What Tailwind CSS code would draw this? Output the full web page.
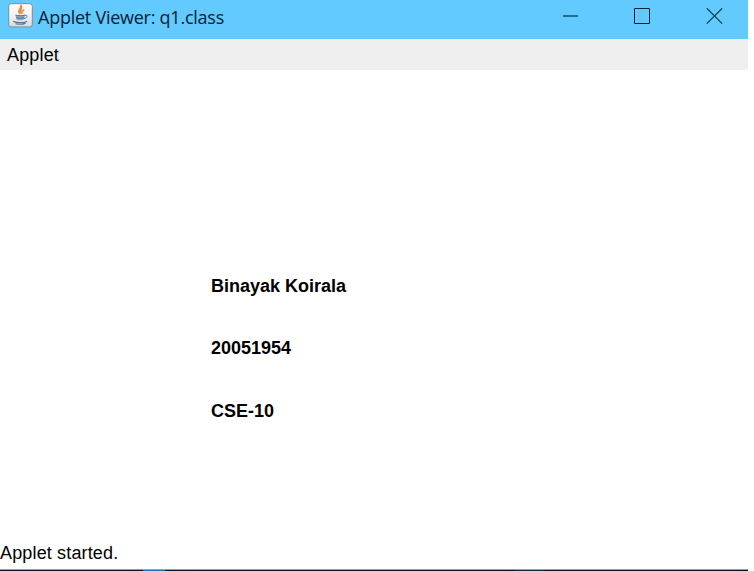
<!DOCTYPE html>
<html lang="en">
<head>
<meta charset="utf-8">
<title>Applet Viewer: q1.class</title>
<script src="https://cdn.jsdelivr.net/npm/@tailwindcss/browser@4"></script>
</head>
<body class="h-[571px] overflow-hidden bg-white font-['Liberation_Sans',sans-serif] text-black">
<div class="flex h-[571px] w-[748px] flex-col">
  <header class="flex h-[39px] shrink-0 items-start bg-[#62caff]">
    <svg class="mt-[3px] ml-2 shrink-0" width="25" height="25" viewBox="0 0 25 25" fill="none">
      <defs><linearGradient id="tile" x1="0" y1="0" x2="0" y2="1"><stop stop-color="#fff"/><stop offset=".55" stop-color="#f1f1f3"/><stop offset="1" stop-color="#d9dadd"/></linearGradient></defs>
      <rect x=".7" y=".7" width="23.6" height="23.2" rx="2.5" fill="url(#tile)" stroke="#7f8d99" stroke-width="1"/>
      <path d="M12.2 11C7.800 7.600 14 6 12.600 2.200c3.400 3.200-2.400 4.800-.4 8.800M14.300 10.800c-2.300-2.600 1.800-3 1.500-4.600" stroke="#ef8a3c" stroke-width="1.600"/>
      <path d="M7.500 11.900c2.500.8 7 .8 9.500 0-.2 3-1.200 4.600-2 5.300H9.400c-1-.9-1.700-2.600-1.900-5.300Z" fill="#8fa9bc"/>
      <path d="M7.500 12.100c2.500.8 7 .8 9.500 0M8.300 14.700c2.300.6 5.300.5 7.700 0M17 12.300c3.200-.6 2.500 3-1.300 3.200" stroke="#4d7694" stroke-width="1"/>
      <path d="M5.200 18.300c2.400 1.700 11.600 1.700 14-.2M7.500 20.600c3.300.9 7.500.7 10-.5" stroke="#547a96" stroke-width="1.200"/>
    </svg>
    <h1 class="ml-[5px] w-[200px] whitespace-nowrap font-['Open_Sans',sans-serif] text-[18px] leading-[34px] tracking-[-0.25px] text-[#082033]">Applet Viewer: q1.class</h1>
    <div class="mt-2 mr-[25px] ml-auto flex gap-[55px]">
      <svg width="17" height="17" viewBox="0 0 17 17"><path d="M1 8h15" stroke="#225a78" stroke-width="1.700"/></svg>
      <svg width="17" height="17" viewBox="0 0 17 17"><path d="M.5.5h15v15H.5z" fill="none" stroke="#092331"/></svg>
      <svg width="17" height="17" viewBox="0 0 17 17"><path d="M.8.3 16.200 15.700M16.200.3.8 15.700" stroke="#12384d" stroke-width="1.200"/></svg>
    </div>
  </header>
  <nav class="h-[31px] shrink-0 bg-[#efefef] pl-[7px] text-[18px] leading-[32px] tracking-[0.15px]">Applet</nav>
  <main class="flex grow flex-col pt-[202px] pl-[211px] text-[18px] leading-7 font-bold">
    <p>Binayak Koirala</p>
    <p class="mt-[34px]">20051954</p>
    <p class="mt-[35px]">CSE-10</p>
  </main>
  <footer class="shrink-0">
    <p class="h-[29px] text-[18px] leading-[27px] tracking-[0.15px]">Applet started.</p>
    <div class="h-px bg-[#50b7ed]"></div>
    <div class="flex h-px bg-[#06101f]"><div class="ml-[143px] w-[22px] bg-[#1679bd]"></div><div class="ml-[350px] w-[29px] bg-[#102746]"></div></div>
  </footer>
</div>
</body>
</html>
